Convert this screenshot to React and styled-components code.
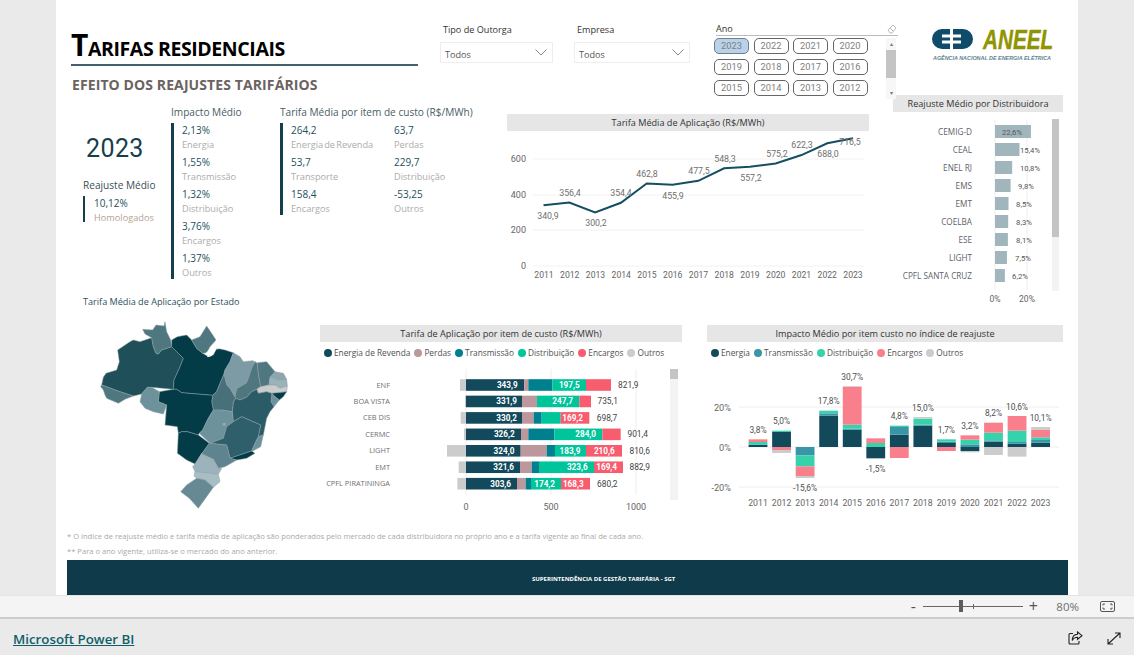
import React from "react";
import styled, { createGlobalStyle } from "styled-components";

const Global = createGlobalStyle`
  html, body { margin: 0; padding: 0; width: 1134px; height: 655px; overflow: hidden; background: #eaeaea; }
  body { font-family: "Open Sans", "Liberation Sans", sans-serif; }
  * { box-sizing: border-box; }
`;

const Page = styled.div`display: flex; flex-direction: column; width: 1134px; height: 655px; background: #eaeaea;`;
const Canvas = styled.main`display: flex; flex-direction: column; width: 1022px; height: 595px; margin-left: 56px; padding: 0 10px 0 11px; background: #fff; overflow: hidden;`;
const RowA = styled.section`display: flex; height: 95px; margin-left: 4px; flex: none;`;
const RowB = styled.section`display: flex; height: 217px; margin-left: 4px; flex: none;`;
const RowC = styled.section`display: flex; height: 213px; margin-left: 4px; flex: none;`;

const TitleBlock = styled.div`width: 369px; padding-top: 27px; flex: none;`;
const Title = styled.h1`
  margin: 0; width: 347px; height: 39px; border-bottom: 2px solid #44606c;
  font: 700 30px/36px "Open Sans", sans-serif; color: #000; letter-spacing: -0.4px;
  white-space: nowrap;
  span { font-size: 19.5px; }
`;
const Subtitle = styled.h2`margin: 10px 0 0 1px; font: 700 14px/18px "Open Sans", sans-serif; color: #6a6360; white-space: nowrap; letter-spacing: .1px;`;

const Slicer = styled.div`width: ${p => p.$w}px; flex: none; padding-top: 23px;`;
const SlicerLabel = styled.div`font-size: 9.1px; line-height: 14px; color: #333; padding-left: 3px;`;
const Dropdown = styled.div`
  display: flex; align-items: center; justify-content: space-between; width: ${p => p.$w}px; height: 21px; margin-top: 5px;
  border: 1px solid #eee; padding: 3px 5px 0 4px; font-size: 9.1px; color: #555;
  svg { display: block; margin-top: -4px; }
`;
const AnoSlicer = styled.div`width: 184px; flex: none; padding-top: 22px; position: relative;`;
const AnoHead = styled.div`display: flex; justify-content: space-between; align-items: center; margin-left: 2px; height: 14px; border-bottom: 1px solid #bbb; font-size: 9.1px; color: #333;`;
const AnoBody = styled.div`display: flex; justify-content: space-between; margin-top: 2px;`;
const YearGrid = styled.div`display: grid; grid-template-columns: repeat(4, 35px); column-gap: 4.5px; row-gap: 5px; height: 58px;`;
const YearBtn = styled.div`
  height: 16px; border: 1px solid ${p => p.$on ? "#6f7f8c" : "#666"}; border-radius: 5px;
  background: ${p => p.$on ? "#b8d2ea" : "#fff"}; color: #808080;
  font: 400 9.3px/14px "Roboto", sans-serif; text-align: center;
`;
const VScroll = styled.div`width: 10px; height: 61px; background: #f7f7f7; display: flex; flex-direction: column; align-items: center; margin-right: 2px; font-size: 6px; line-height: 12px; color: #777;`;
const VThumb = styled.div`width: 10px; height: 28px; background: #c4c4c4; flex: none; margin-bottom: 9px;`;
const LogoBox = styled.div`flex: none; margin: 14px 0 0 32px; svg { display: block; }`;

const StatsCol = styled.div`width: 436px; flex: none; display: flex; flex-direction: column; justify-content: space-between; padding-bottom: 4px;`;
const StatsRow = styled.div`display: flex; padding-left: 12px;`;
const LeadStat = styled.div`width: 88px; flex: none;`;
const BigYear = styled.div`font: 400 25px/30px "Roboto", sans-serif; letter-spacing: .4px; color: #163f4d; margin: 39px 0 0 3px;`;
const LeadTitle = styled.div`font-size: 10.1px; line-height: 14px; color: #3b4f57; margin-top: 14px;`;
const StatGroup = styled.div`width: ${p => p.$w}px; flex: none; padding-top: 10px;`;
const GroupTitle = styled.div`font-size: 10.1px; line-height: 14px; color: #4a5d65; white-space: nowrap; margin-bottom: 4px;`;
const Barred = styled.div`
  border-left: 3px solid #143f4e; padding-left: 8px;
  display: ${p => p.$grid ? "grid" : "flex"}; flex-direction: column; gap: 4px 0;
  grid-template-columns: 103px 80px;
`;
const LeadBarred = styled(Barred)`border-left-width: 2px; padding-left: 9px; margin-top: 4px; height: 26px; display: block;`;
const Item = styled.div`height: 28px;`;
const Value = styled.div`font-size: 10px; line-height: 15px; color: #24505c;`;
const Label = styled.div`font-size: 9.2px; line-height: 13px; margin-top: -.5px; word-spacing: -1.2px; color: ${p => p.$tan ? "#b79f93" : "#acacac"}; white-space: nowrap;`;
const MapTitle = styled.div`font-size: 9.1px; line-height: 12px; color: #2d4f5c; padding-left: 12px;`;

const LineCol = styled.div`width: 386px; flex: none; padding-top: 19px; svg { display: block; }`;
const DistCol = styled.div`width: 170px; flex: none; svg { display: block; }`;
const Header = styled.div`
  width: ${p => p.$w}px; height: 17px; background: #e6e6e6; color: #333; flex: none;
  font-size: 9.15px; line-height: 17px; text-align: center; white-space: nowrap;
`;

const MapCol = styled.div`width: 249px; flex: none; svg { display: block; margin: 0 0 0 -1px; }`;
const ChartCol = styled.div`width: ${p => p.$w}px; flex: none; padding-top: 13px; svg { display: block; }`;
const Legend = styled.div`display: flex; align-items: center; height: 14px; margin: 4px 0 2px 4px; font-size: 8.3px; line-height: 14px; color: #4f4f4f; white-space: nowrap;`;
const LegendItem = styled.span`display: flex; align-items: center; gap: 2px; margin-right: 4px;`;
const Dot = styled.i`width: 8px; height: 8px; border-radius: 50%; background: ${p => p.$c}; display: block; flex: none;`;

const Notes = styled.div`padding-top: 4px; height: 35px; flex: none; font-size: 7.6px; line-height: 15px; color: #a9a9a9; white-space: nowrap;`;
const Banner = styled.div`height: 35px; flex: none; background: #0f3a4a; color: #fff; display: flex; align-items: center; padding: 2px 0 0 465px; font: 700 6px/10px "Open Sans", sans-serif; white-space: nowrap;`;

const StatusBar = styled.div`height: 24px; flex: none; background: #f4f4f4; border-bottom: 2px solid #cdcdcd; border-top: 1px solid #e4e4e4; display: flex; align-items: center; justify-content: flex-end; padding-right: 19px; color: #666;`;
const ZoomSign = styled.span`font-size: 16px; line-height: 15px; color: #555; width: 10px; text-align: center;`;
const Slider = styled.div`width: 100px; height: 1px; background: #666; margin: 0 5px; position: relative;`;
const SliderThumb = styled.div`position: absolute; left: 36px; top: -6px; width: 4px; height: 12px; background: #5d5d5d;`;
const SliderTick = styled.div`position: absolute; left: 50px; top: -2px; width: 1px; height: 5px; background: #666;`;
const ZoomPct = styled.span`font-size: 11.5px; margin: 0 21px 0 18px; color: #6f6f6f;`;
const Foot = styled.footer`flex: 1; display: flex; align-items: center; justify-content: space-between; padding: 0 13px 0 13px; svg { display: block; }`;
const PowerBi = styled.a`font: 600 13.3px/20px "Open Sans", sans-serif; color: #0f6068; text-decoration: underline; margin-top: 4px;`;
const FootIcons = styled.div`display: flex; align-items: center; gap: 24px; margin-top: 2px;`;

const AxisText = styled.text`font: 400 ${p => p.$s || 8.6}px "Roboto", sans-serif; fill: #666;`;
const DataText = styled.text`font: 400 ${p => p.$s || 8.8}px "Roboto", sans-serif; fill: ${p => p.$c || "#707070"};`;
const BarText = styled.text`font: ${p => p.$w || 700} ${p => p.$s || 8.2}px "Roboto", sans-serif; fill: ${p => p.$c || "#fff"};`;
const CatText = styled.text`font: 400 7.4px "Open Sans", sans-serif; fill: #707070;`;
const DistText = styled.text`font: 400 8.2px "Open Sans", sans-serif; fill: #5f5f6a;`;
const LogoWord = styled.text`font: italic 700 28px "Liberation Sans", sans-serif; fill: #8f9400; stroke: #8f9400; stroke-width: .4;`;
const LogoTag = styled.text`font: italic 700 5.6px "Liberation Sans", sans-serif; fill: #5d8390;`;

const STACK = { en: "#124a5c", pe: "#bc989d", tr: "#007f8f", di: "#00c49a", ec: "#f75d6e", ou: "#cccccc" };
const COL = { en: "#124a5c", tr: "#3a95a6", di: "#36d2ac", ec: "#f97f8c", ou: "#cccccc" };

const lineData = [
  [340.9, 548, 216], [356.4, 570, 193], [300.2, 596, 223], [354.4, 621, 193], [462.8, 647, 174], [455.9, 673, 196],
  [477.5, 699, 171], [548.3, 725, 159], [557.2, 751, 178], [575.2, 777, 154], [622.3, 802, 145], [688.0, 828, 154], [716.5, 850, 142],
];
const fmt = v => v.toFixed(1).replace(".", ",");

function LineChart() {
  const pts = lineData.map((d, i) => `${543.5 + i * 25.8},${266 - d[0] * 0.1783}`).join(" ");
  return (
    <svg width="362" height="160" viewBox="507 131 362 160">
      {[[600, 159], [400, 195], [200, 230], [0, 266]].map(([v, y]) => (
        <g key={v}>
          <line x1="533" x2="864" y1={y} y2={y} stroke="#f2f2f2" />
          <AxisText $s={9} x="526" y={y + 3} textAnchor="end">{v}</AxisText>
        </g>
      ))}
      {lineData.map((d, i) => (
        <AxisText key={i} x={544 + i * 25.75} y="277.500" textAnchor="middle">{2011 + i}</AxisText>
      ))}
      <polyline points={pts} fill="none" stroke="#154e63" strokeWidth="2" />
      {lineData.map(d => (
        <DataText key={d[0]} x={d[1]} y={d[2] + 3} textAnchor="middle">{fmt(d[0])}</DataText>
      ))}
    </svg>
  );
}

const distData = [["CEMIG-D", 22.6, 1012], ["CEAL", 15.4, 1030], ["ENEL RJ", 10.8, 1030], ["EMS", 9.8, 1026], ["EMT", 8.5, 1024], ["COELBA", 8.3, 1024], ["ESE", 8.1, 1024], ["LIGHT", 7.5, 1023], ["CPFL SANTA CRUZ", 6.2, 1020]];

function DistChart() {
  return (
    <svg width="170" height="198" viewBox="893 112 170 198">
      <line x1="995" x2="995" y1="120" y2="290" stroke="#eee" />
      <line x1="1027" x2="1027" y1="120" y2="290" stroke="#eee" />
      <rect x="1052" y="119" width="7" height="172" fill="#f3f3f3" />
      <rect x="1052" y="119" width="7" height="118" fill="#c4c4c4" />
      {distData.map(([n, v, lx], i) => {
        const y = 131.5 + i * 18;
        const w = v * 1.59;
        return (
          <g key={n}>
            <DistText x="972" y={y + 3} textAnchor="end">{n}</DistText>
            <rect x="995" y={y - 6.5} width={w} height="13" fill="#a1b5bd" />
            <BarText $c="#555" $w={400} $s={7.7} x={lx} y={y + 3} textAnchor="middle">
              {v.toFixed(1).replace(".", ",")}%
            </BarText>
          </g>
        );
      })}
      <AxisText x="995" y="302" textAnchor="middle">0%</AxisText>
      <AxisText x="1027" y="302" textAnchor="middle">20%</AxisText>
    </svg>
  );
}

const stackRows = [
  { n: "ENF", s: [["ou", 435, 453], ["en", 453, 628], ["pe", 628, 640], ["tr", 640, 712], ["di", 712, 813], ["ec", 813, 888]], l: [["343,9", 577], ["197,5", 763]], t: ["821,9", 940] },
  { n: "BOA VISTA", s: [["ou", 450, 453], ["en", 453, 621], ["pe", 621, 666], ["di", 666, 793], ["ec", 793, 828]], l: [["331,9", 575], ["247,7", 743]], t: ["735,1", 878] },
  { n: "CEB DIS", s: [["ou", 437, 453], ["en", 453, 621], ["pe", 621, 656], ["tr", 656, 680], ["di", 680, 737], ["ec", 737, 823]], l: [["330,2", 575], ["169,2", 773]], t: ["698,7", 876] },
  { n: "CERMC", s: [["ou", 447, 453], ["en", 453, 618], ["pe", 618, 640], ["tr", 640, 718], ["di", 718, 862], ["ec", 862, 917]], l: [["326,2", 568], ["284,0", 812]], t: ["901,4", 968] },
  { n: "LIGHT", s: [["ou", 396, 453], ["en", 453, 617], ["pe", 617, 695], ["tr", 695, 720], ["di", 720, 813], ["ec", 813, 921]], l: [["324,0", 567], ["183,9", 765], ["210,6", 868]], t: ["810,6", 974] },
  { n: "EMT", s: [["ou", 431, 453], ["en", 453, 615], ["pe", 615, 650], ["tr", 650, 672], ["di", 672, 837], ["ec", 837, 924]], l: [["321,6", 566], ["323,6", 787], ["169,4", 875]], t: ["882,9", 974] },
  { n: "CPFL PIRATININGA", s: [["ou", 427, 453], ["en", 453, 606], ["pe", 606, 632], ["tr", 632, 648], ["di", 648, 738], ["ec", 738, 825]], l: [["303,6", 557], ["174,2", 689], ["168,3", 775]], t: ["680,2", 877] },
];
const sx = v => 315 + v / 3;

function StackChart() {
  return (
    <svg width="362" height="153" viewBox="320 362 362 153">
      {[0, 500, 1000].map((v, i) => (
        <g key={v}>
          <line x1={466 + i * 85} x2={466 + i * 85} y1="369" y2="495" stroke="#eeeeee" />
          <AxisText $s={9} x={466 + i * 85} y="510" textAnchor="middle">{v}</AxisText>
        </g>
      ))}
      <rect x="670" y="369" width="8" height="131" fill="#f3f3f3" />
      <rect x="670" y="369" width="8" height="10" fill="#c4c4c4" />
      {stackRows.map((r, i) => {
        const y = 385 + i * 16.45;
        return (
          <g key={r.n}>
            <CatText x="390" y={y + 2.5} textAnchor="end">{r.n}</CatText>
            {r.s.map(([k, a, b]) => (
              <rect key={k} x={sx(a)} y={y - 5.8} width={(b - a) / 3} height="11.600" fill={STACK[k]} />
            ))}
            {r.l.map(([t, x]) => (
              <BarText key={t} x={sx(x)} y={y + 3} textAnchor="middle">{t}</BarText>
            ))}
            <BarText $c="#444" $w={400} $s={8.4} x={sx(r.t[1])} y={y + 3} textAnchor="middle">{r.t[0]}</BarText>
          </g>
        );
      })}
    </svg>
  );
}

const colRows = [
  { s: [["en", 374, 381], ["di", 366, 374], ["ec", 358, 366]], l: ["3,8%", 330] },
  { s: [["en", 336, 381], ["di", 332, 336], ["ec", 381, 390], ["ou", 390, 399]], l: ["5,0%", 303] },
  { s: [["tr", 381, 406], ["di", 406, 439], ["ec", 439, 468], ["ou", 468, 474]], l: ["-15,6%", 505] },
  { s: [["en", 287, 381], ["tr", 280, 287], ["di", 272, 280]], l: ["17,8%", 243] },
  { s: [["en", 329, 381], ["tr", 326, 329], ["di", 314, 326], ["ec", 200, 314], ["ou", 198, 200]], l: ["30,7%", 171] },
  { s: [["en", 381, 415], ["di", 369, 381], ["ec", 355, 369]], l: ["-1,5%", 447] },
  { s: [["en", 344, 381], ["tr", 321, 344], ["di", 317, 321], ["ec", 381, 414]], l: ["4,8%", 288] },
  { s: [["en", 317, 381], ["tr", 314, 317], ["di", 296, 314], ["ou", 291, 296]], l: ["15,0%", 264] },
  { s: [["en", 369, 381], ["tr", 365, 369], ["di", 358, 365], ["ec", 381, 393]], l: ["1,7%", 330] },
  { s: [["en", 381, 393], ["tr", 373, 381], ["di", 359, 373], ["ec", 346, 359], ["ou", 393, 397]], l: ["3,2%", 318] },
  { s: [["en", 365, 381], ["tr", 361, 365], ["di", 338, 361], ["ec", 308, 338], ["ou", 381, 405]], l: ["8,2%", 279] },
  { s: [["en", 371, 381], ["tr", 366, 371], ["di", 332, 366], ["ec", 288, 332], ["ou", 381, 410]], l: ["10,6%", 261] },
  { s: [["en", 368, 381], ["tr", 360, 368], ["di", 352, 360], ["ec", 330, 352], ["ou", 321, 330]], l: ["10,1%", 294] },
];
const cy = v => 320 + v / 3;

function ColumnChart() {
  return (
    <svg width="356" height="150" viewBox="707 362 356 150">
      {[["20%", 407], ["0%", 447], ["-20%", 487]].map(([t, y]) => (
        <g key={t}>
          <line x1="739" x2="1059" y1={y} y2={y} stroke="#eeeeee" />
          <AxisText $s={9.2} x="731" y={y + 3.5} textAnchor="end">{t}</AxisText>
        </g>
      ))}
      {colRows.map((r, i) => {
        const c = 758 + i * 23.55;
        return (
          <g key={i}>
            {r.s.map(([k, a, b]) => (
              <rect key={k} x={c - 9.4} y={cy(a)} width="18.800" height={(b - a) / 3} fill={COL[k]} />
            ))}
            <DataText $c="#505050" $s={8.4} x={c} y={cy(r.l[1]) + 3} textAnchor="middle">{r.l[0]}</DataText>
            <AxisText $s={8.7} x={c} y="505.500" textAnchor="middle">{2011 + i}</AxisText>
          </g>
        );
      })}
    </svg>
  );
}

const states = [
  ["#1f4f59", "95,285 100,262 108,250 140,240 148,215 143,180 180,155 190,150 210,155 245,143 250,170 258,190 265,192 275,180 305,170 340,205 328,235 312,270 310,298 245,292 232,292 215,312 190,318 150,305"],
  ["#4f7780", "218,118 248,120 258,105 282,108 285,95 290,125 302,150 305,170 275,180 265,192 258,190 250,170 245,143 225,132"],
  ["#033c47", "305,170 305,150 322,140 350,135 365,150 380,175 398,190 415,200 430,195 440,175 465,180 490,188 480,215 465,240 462,252 448,285 440,305 428,316 335,308 320,298 310,298 312,270 328,235 340,205"],
  ["#4f7780", "365,150 390,140 410,108 425,130 438,150 420,170 410,188 398,190 380,175"],
  ["#7d9ba4", "490,188 510,200 520,215 548,212 555,215 545,235 535,265 530,278 500,296 495,322 480,295 470,285 462,252 465,240 480,215"],
  ["#4f7780", "555,215 562,220 565,250 572,290 560,298 545,305 530,322 510,330 497,325 495,322 500,296 530,278 535,265 545,235"],
  ["#4f7780", "562,218 590,215 615,245 600,262 597,285 572,290 565,250"],
  ["#8ba6ae", "615,245 640,250 650,268 625,272 610,265 600,262"],
  ["#9ab2ba", "600,262 610,265 625,272 650,268 652,288 630,295 615,285 597,285"],
  ["#cccccc", "572,290 597,285 615,285 630,295 652,288 650,305 625,308 605,310 590,305 565,310 560,298"],
  ["#033c47", "605,310 625,308 650,305 640,320 628,330 615,320"],
  ["#6e929b", "605,310 615,320 628,330 612,350 603,335"],
  ["#2b5b66", "530,322 545,305 560,298 565,310 590,305 605,310 603,335 612,350 600,365 590,385 585,410 580,435 565,440 572,405 515,380 490,395 487,365 490,335 497,325 510,330"],
  ["#47707a", "462,252 470,285 480,295 495,322 497,325 490,335 487,365 455,360 430,360 425,335 428,316 440,305 448,285"],
  ["#033c47", "268,305 310,298 320,298 335,308 428,316 425,335 430,360 415,385 398,420 388,430 385,435 352,425 335,425 325,430 322,410 285,405 290,345 265,335"],
  ["#6e929b", "215,312 232,292 245,292 268,305 265,335 290,345 280,372 250,365 225,355 210,335"],
  ["#4f7780", "92,290 95,285 150,305 190,318 165,328 145,340 110,325 105,315 100,300"],
  ["#033c47", "335,425 352,425 385,435 418,460 400,485 395,490 375,522 350,510 322,490 325,430"],
  ["#6e929b", "430,360 455,360 487,365 490,395 470,410 460,445 420,460 388,430 398,420 415,385"],
  ["#2f5f6a", "490,395 515,380 572,405 565,440 555,460 545,483 480,505 470,465 420,460 460,445 470,410"],
  ["#6e929b", "565,440 580,435 572,470 548,483 545,483 555,460"],
  ["#033c47", "545,483 555,490 530,505 500,510 480,505"],
  ["#5e858f", "420,460 470,465 480,505 500,510 465,530 445,535 430,508 395,492 400,485 418,460"],
  ["#9cb3bc", "395,492 430,508 445,535 455,535 445,553 375,545 368,530 375,522"],
  ["#a9bdc4", "375,545 445,553 450,575 430,592 405,570 380,565 372,558"],
  ["#658a94", "380,565 405,570 430,592 410,620 385,655 358,625 332,605 350,585"],
];

function BrazilMap() {
  return (
    <svg width="250" height="213" viewBox="0 66 750 639">
      {states.map(([c, p], i) => (
        <polygon key={i} points={p} fill={c} stroke="#8a9ea5" strokeWidth="1.500" strokeLinejoin="round" />
      ))}
      <rect x="458" y="399" width="9" height="8" fill="#9aa" />
      <path d="M408 190l14-12 24-2M412 200l12-3 12-16" fill="none" stroke="#fff" strokeWidth="3" />
    </svg>
  );
}

function Logo() {
  return (
    <svg width="130" height="50" viewBox="930 14 130 50">
      <path d="M950 29h-8a10 10 0 0 0 0 20h8v-5.500h-8v-3h8v-3h-8v-3h8z" fill="#0f4c6a" />
      <path d="M953 29h10a10 10 0 0 1 0 20h-10v-5.500h8v-3h-8v-3h8v-3h-8z" fill="#0f4c6a" />
      <LogoWord transform="translate(983 49) scale(.74 1)">ANEEL</LogoWord>
      <LogoTag x="933" y="60" textLength="118" lengthAdjust="spacingAndGlyphs">AGÊNCIA NACIONAL DE ENERGIA ELÉTRICA</LogoTag>
    </svg>
  );
}

const Chevron = () => (
  <svg width="12" height="7" viewBox="0 0 12 7"><path d="M.5.5 6 6l5.500-5.500" fill="none" stroke="#777" strokeWidth=".9" /></svg>
);

const Eraser = () => (
  <svg width="10" height="10" viewBox="0 0 10 10" style={{ marginRight: 1 }}>
    <path d="M1 6 6 1l3 3-4 5H3z" fill="none" stroke="#aaa" strokeWidth=".8" /><path d="M3 4l3 3" stroke="#aaa" strokeWidth=".8" />
  </svg>
);

const ShareIcon = () => (
  <svg width="15" height="14" viewBox="0 0 15 14" fill="none" stroke="#222" strokeWidth="1.100">
    <path d="M5 2.500H2a1 1 0 0 0-1 1V12a1 1 0 0 0 1 1h8a1 1 0 0 0 1-1v-2" />
    <path d="M9.500 1 14 4.700 9.500 8.300V6.300C7 6.300 5.300 7.300 4.300 9.500c0-3.800 2-6 5.200-6.200z" />
  </svg>
);
const ExpandIcon = () => (
  <svg width="14" height="13" viewBox="0 0 14 13" fill="none" stroke="#222" strokeWidth="1.100">
    <path d="M1 12 13 1M8 1h5v5M1 7v5h5" />
  </svg>
);
const FitIcon = () => (
  <svg width="15" height="11" viewBox="0 0 15 11" fill="none" stroke="#555" strokeWidth="1" style={{ display: "block" }}>
    <rect x=".5" y=".5" width="14" height="10" rx="1.500" />
    <path d="M3 4.500V3h2M10 3h2v1.500M3 6.500V8h2M10 8h2V6.500" />
  </svg>
);

const years = [2023, 2022, 2021, 2020, 2019, 2018, 2017, 2016, 2015, 2014, 2013, 2012];
const impact = [["2,13%", "Energia"], ["1,55%", "Transmissão"], ["1,32%", "Distribuição"], ["3,76%", "Encargos"], ["1,37%", "Outros"]];
const tariff = [["264,2", "Energia de Revenda"], ["63,7", "Perdas"], ["53,7", "Transporte"], ["229,7", "Distribuição"], ["158,4", "Encargos"], ["-53,25", "Outros"]];
const legend1 = [["Energia de Revenda", STACK.en], ["Perdas", STACK.pe], ["Transmissão", STACK.tr], ["Distribuição", STACK.di], ["Encargos", STACK.ec], ["Outros", STACK.ou]];
const legend2 = [["Energia", COL.en], ["Transmissão", COL.tr], ["Distribuição", COL.di], ["Encargos", COL.ec], ["Outros", COL.ou]];

export default function App() {
  return (
    <Page>
      <Global />
      <Canvas>
        <RowA>
          <TitleBlock>
            <Title>T<span>ARIFAS RESIDENCIAIS</span></Title>
            <Subtitle>EFEITO DOS REAJUSTES TARIFÁRIOS</Subtitle>
          </TitleBlock>
          <Slicer $w={134}>
            <SlicerLabel>Tipo de Outorga</SlicerLabel>
            <Dropdown $w={113}>Todos<Chevron /></Dropdown>
          </Slicer>
          <Slicer $w={140}>
            <SlicerLabel>Empresa</SlicerLabel>
            <Dropdown $w={116}>Todos<Chevron /></Dropdown>
          </Slicer>
          <AnoSlicer>
            <AnoHead>Ano<Eraser /></AnoHead>
            <AnoBody>
              <YearGrid>{years.map(y => <YearBtn key={y} $on={y === 2023}>{y}</YearBtn>)}</YearGrid>
              <VScroll>▴<VThumb />▾</VScroll>
            </AnoBody>
          </AnoSlicer>
          <LogoBox><Logo /></LogoBox>
        </RowA>
        <RowB>
          <StatsCol>
            <StatsRow>
              <LeadStat>
                <BigYear>2023</BigYear>
                <LeadTitle>Reajuste Médio</LeadTitle>
                <LeadBarred>
                  <Value>10,12%</Value>
                  <Label $tan>Homologados</Label>
                </LeadBarred>
              </LeadStat>
              <StatGroup $w={109}>
                <GroupTitle>Impacto Médio</GroupTitle>
                <Barred>
                  {impact.map(([v, l]) => <Item key={l}><Value>{v}</Value><Label>{l}</Label></Item>)}
                </Barred>
              </StatGroup>
              <StatGroup $w={200}>
                <GroupTitle>Tarifa Média por item de custo (R$/MWh)</GroupTitle>
                <Barred $grid>
                  {tariff.map(([v, l]) => <Item key={l + v}><Value>{v}</Value><Label>{l}</Label></Item>)}
                </Barred>
              </StatGroup>
            </StatsRow>
            <MapTitle>Tarifa Média de Aplicação por Estado</MapTitle>
          </StatsCol>
          <LineCol>
            <Header $w={362}>Tarifa Média de Aplicação (R$/MWh)</Header>
            <LineChart />
          </LineCol>
          <DistCol>
            <Header $w={170}>Reajuste Médio por Distribuidora</Header>
            <DistChart />
          </DistCol>
        </RowB>
        <RowC>
          <MapCol><BrazilMap /></MapCol>
          <ChartCol $w={387}>
            <Header $w={362}>Tarifa de Aplicação por item de custo (R$/MWh)</Header>
            <Legend>
              {legend1.map(([t, c]) => <LegendItem key={t}><Dot $c={c} />{t}</LegendItem>)}
            </Legend>
            <StackChart />
          </ChartCol>
          <ChartCol $w={356}>
            <Header $w={356}>Impacto Médio por item custo no índice de reajuste</Header>
            <Legend>
              {legend2.map(([t, c]) => <LegendItem key={t}><Dot $c={c} />{t}</LegendItem>)}
            </Legend>
            <ColumnChart />
          </ChartCol>
        </RowC>
        <Notes>
          <div>* O índice de reajuste médio e tarifa média de aplicação são ponderados pelo mercado de cada distribuidora no próprio ano e a tarifa vigente ao final de cada ano.</div>
          <div>** Para o ano vigente, utiliza-se o mercado do ano anterior.</div>
        </Notes>
        <Banner>SUPERINTENDÊNCIA DE GESTÃO TARIFÁRIA - SGT</Banner>
      </Canvas>
      <StatusBar>
        <ZoomSign>-</ZoomSign>
        <Slider><SliderThumb /><SliderTick /></Slider>
        <ZoomSign>+</ZoomSign>
        <ZoomPct>80%</ZoomPct>
        <FitIcon />
      </StatusBar>
      <Foot>
        <PowerBi href="#">Microsoft Power BI</PowerBi>
        <FootIcons><ShareIcon /><ExpandIcon /></FootIcons>
      </Foot>
    </Page>
  );
}
